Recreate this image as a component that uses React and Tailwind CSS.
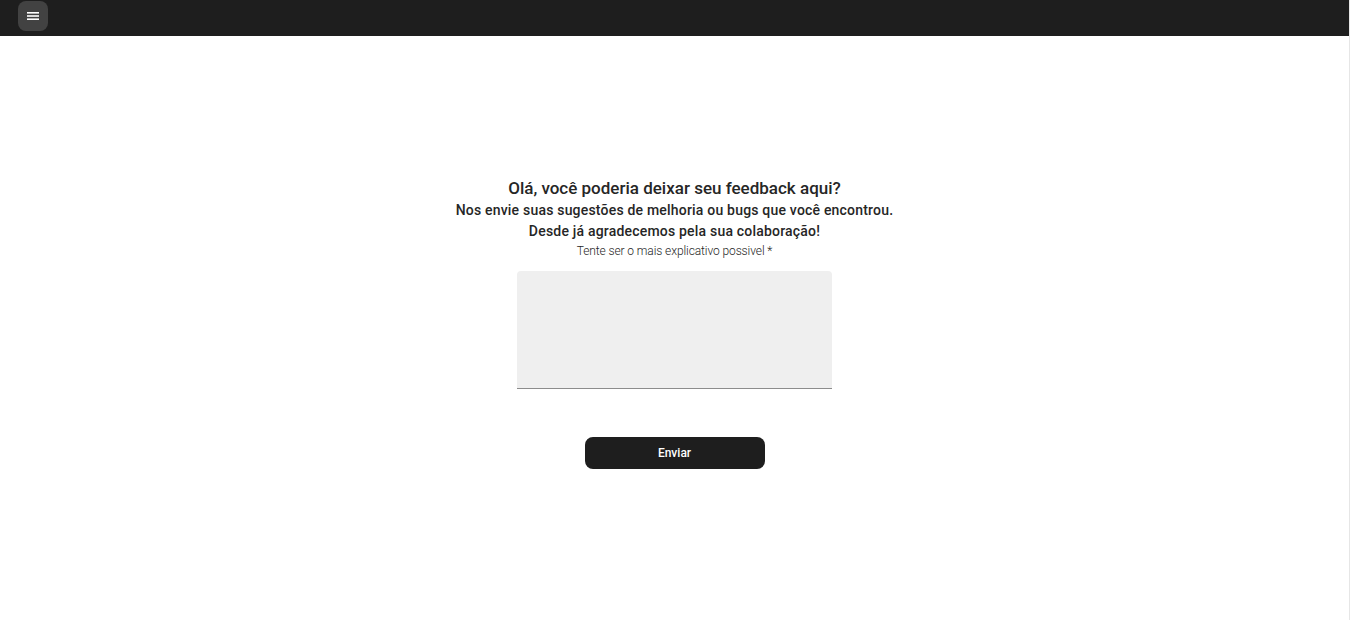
import React, { useState } from 'react'

export default function App() {
  const [feedback, setFeedback] = useState("")

  return (
    <div className="min-h-screen bg-white font-['Roboto',sans-serif] border-r border-[#e6e6e6]">
      {/* Top bar */}
      <header className="h-[36px] bg-[#1e1e1e] flex items-start pl-[18px] pt-px">
        <button className="w-[30px] h-[30px] rounded-[8px] bg-[#424242] flex items-center justify-center">
          <svg width="12" height="10" viewBox="0 0 12 10" fill="none">
            <rect x="0" y="1" width="12" height="1.6" fill="#fff" />
            <rect x="0" y="4.2" width="12" height="1.6" fill="#fff" />
            <rect x="0" y="7.4" width="12" height="1.6" fill="#fff" />
          </svg>
        </button>
      </header>

      {/* Feedback form */}
      <main className="flex flex-col items-center pt-[141px] text-[#262626]">
        <h1 className="text-[17px] leading-[22px] font-medium">Olá, você poderia deixar seu feedback aqui?</h1>
        <p className="text-[14px] leading-[21px] font-medium tracking-[0.2px] mt-[1px]">Nos envie suas sugestões de melhoria ou bugs que você encontrou.</p>
        <p className="text-[14px] leading-[21px] font-medium tracking-[0.2px]">Desde já agradecemos pela sua colaboração!</p>
        <label className="text-[12px] leading-[16px] font-light tracking-[-0.1px] mt-[1px]">Tente ser o mais explicativo possivel *</label>
        <textarea
          value={feedback}
          onChange={(e) => setFeedback(e.target.value)}
          className="mt-[12px] w-[315px] h-[118px] bg-[#efefef] rounded-t-[4px] border-b border-[#8c8c8c] resize-none outline-none p-3 text-sm"
        />
        <button className="mt-[48px] w-[180px] h-[32px] rounded-[8px] bg-[#1e1e1e] text-white text-[12px] font-medium pb-px">
          Enviar
        </button>
      </main>
    </div>
  )
}
